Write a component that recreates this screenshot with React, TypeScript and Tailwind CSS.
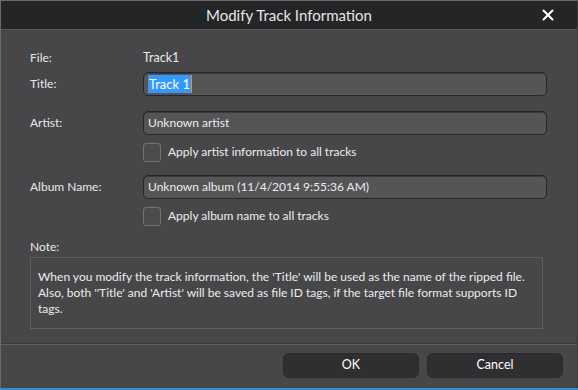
import { X } from "lucide-react";

const font = { fontFamily: "'Lato', 'Open Sans', sans-serif" };

function Field({ value, selected }: { value: string; selected?: boolean }) {
  return (
    <div className="flex h-[24px] flex-1 items-center rounded-[5px] border border-[#262628] bg-[#555557] px-[4px] text-[12px] text-[#ececec] shadow-[inset_0_1px_0_#3a3a3c]">
      {selected ? (
        <span className="flex items-center bg-[#3399ff] pl-[1px] text-[13px] leading-[18px] text-white">
          {value}
          <span className="ml-[1px] h-[18px] w-px bg-[#ff8a00]" />
        </span>
      ) : (
        <span>{value}</span>
      )}
    </div>
  );
}

function Check({ label }: { label: string }) {
  return (
    <div className="flex items-center gap-[7px] pl-[113px]">
      <div className="h-[19px] w-[18px] rounded-[3px] border border-[#737375] bg-[#4b4b4d]" />
      <span className="text-[12px] text-[#ececec]">{label}</span>
    </div>
  );
}

function Row({ label, children }: { label: string; children: React.ReactNode }) {
  return (
    <div className="flex items-center">
      <span className="w-[113px] shrink-0 text-[12px] text-[#e8e8e8]">{label}</span>
      {children}
    </div>
  );
}

export default function App() {
  return (
    <div className="h-[390px] w-[578px] bg-[#2f8fd0]" style={font}>
      <div className="flex h-[388px] flex-col border-l border-r border-t border-[#6a6a6c] border-r-[#3a3a3c] bg-[#474749]">
        {/* Title bar */}
        <div className="relative flex h-[29px] shrink-0 items-center justify-center border-b border-[#58585a] bg-[#242527]">
          <span className="text-[15px] text-[#e6e6e6]">Modify Track Information</span>
          <X className="absolute right-[20px] top-[5px] h-[18px] w-[18px] text-white" strokeWidth={2.6} />
        </div>

        {/* Body */}
        <div className="flex flex-1 flex-col pl-[29px] pr-[30px] pt-[19px]">
          <Row label="File:">
            <span className="text-[12.5px] text-[#ececec]">Track1</span>
          </Row>
          <div className="mt-[4px]">
            <Row label="Title:">
              <Field value="Track 1" selected />
            </Row>
          </div>
          <div className="mt-[15px]">
            <Row label="Artist:">
              <Field value="Unknown artist" />
            </Row>
          </div>
          <div className="mt-[8px]">
            <Check label="Apply artist information to all tracks" />
          </div>
          <div className="mt-[13px]">
            <Row label="Album Name:">
              <Field value="Unknown album (11/4/2014 9:55:36 AM)" />
            </Row>
          </div>
          <div className="mt-[8px]">
            <Check label="Apply album name to all tracks" />
          </div>
          <span className="mt-[12px] text-[12px] text-[#e8e8e8]">Note:</span>
          <div className="mr-[4px] mt-[1px] border border-[#5e5e60] px-[7px] pb-[11px] pt-[11px] text-[12px] leading-[16px] text-[#ececec]">
            When you modify the track information, the 'Title' will be used as the name of the ripped file. Also, both ''Title' and 'Artist' will be saved as file ID tags, if the target file format supports ID tags.
          </div>
        </div>

        {/* Footer */}
        <div className="flex h-[44px] shrink-0 items-start justify-end gap-[8px] border-t border-[#616163] pr-[14px] pt-[8px] shadow-[0_-1px_0_#3a3a3c]">
          <button className="h-[25px] w-[136px] rounded-[6px] border border-[#2a2a2c] bg-[#2f2f31] text-[12.5px] text-white">
            OK
          </button>
          <button className="h-[25px] w-[136px] rounded-[6px] border border-[#2a2a2c] bg-[#2f2f31] text-[12.5px] text-white">
            Cancel
          </button>
        </div>
      </div>
    </div>
  );
}
